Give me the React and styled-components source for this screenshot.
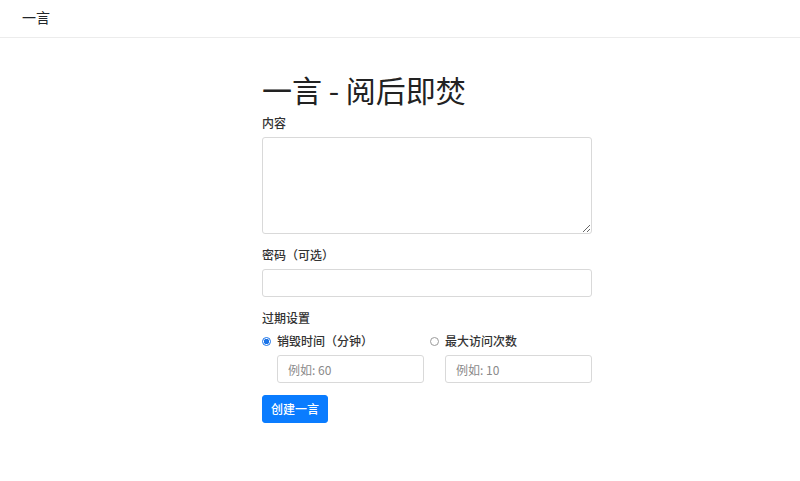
import React from 'react';
import styled, { createGlobalStyle } from 'styled-components';

const GlobalStyle = createGlobalStyle`
  * { box-sizing: border-box; }
  body {
    margin: 0;
    background: #fff;
    color: #212529;
    font-family: "Noto Sans CJK SC", "Noto Sans", "Liberation Sans", sans-serif;
  }
`;

const Navbar = styled.nav`
  height: 38px;
  border-bottom: 1px solid #ececec;
  display: flex;
  align-items: center;
  padding: 0 22px;
`;

const Brand = styled.a`
  font-size: 14px;
  color: #212529;
  text-decoration: none;
  line-height: 1;
  margin-top: -3px;
`;

const Main = styled.main`
  width: 330px;
  margin: 34px 0 0 calc(50% - 138px);
`;

const Title = styled.h1`
  font-size: 30px;
  font-weight: 400;
  line-height: 34px;
  margin: 0 0 8px;
  color: #222;
`;

const Group = styled.div`
  margin-bottom: ${(p) => p.$mb || 12}px;
`;

const Label = styled.label`
  display: block;
  font-size: 12px;
  font-weight: 500;
  line-height: 18px;
  margin-bottom: 5px;
  color: #333;
`;

const TextArea = styled.textarea`
  display: block;
  width: 100%;
  height: 97px;
  border: 1px solid #d9d9d9;
  border-radius: 3px;
  padding: 4px 10px;
  font: inherit;
  font-size: 12px;
  resize: vertical;
  outline: none;
`;

const Input = styled.input`
  display: block;
  width: 100%;
  height: 28px;
  border: 1px solid #d9d9d9;
  border-radius: 3px;
  padding: 4px 10px;
  font: inherit;
  font-size: 12px;
  color: #212529;
  outline: none;
  &::placeholder {
    color: #8a8a8a;
  }
`;

const Columns = styled.div`
  display: grid;
  grid-template-columns: 1fr 1fr;
  column-gap: 6px;
`;

const Option = styled.div`
  display: flex;
  flex-direction: column;
  gap: 5px;
`;

const RadioLabel = styled.label`
  display: flex;
  align-items: center;
  font-size: 12px;
  font-weight: 500;
  line-height: 18px;
  color: #333;
`;

const Radio = styled.input.attrs({ type: 'radio' })`
  appearance: none;
  width: 9px;
  height: 9px;
  margin: 0 6px 0 0;
  border-radius: 50%;
  border: 1px solid #9a9a9a;
  background: #fff;
  &:checked {
    border-color: #1a73e8;
    background: radial-gradient(circle, #1a73e8 0 2.5px, #fff 3px);
  }
`;

const Indented = styled.div`
  padding-left: 15px;
`;

const Button = styled.button`
  background: #0a7cff;
  color: #fff;
  border: 1px solid #0a7cff;
  border-radius: 3px;
  font: inherit;
  font-size: 12px;
  font-weight: 500;
  line-height: 18px;
  padding: 4px 8px;
  height: 28px;
  cursor: pointer;
`;

const App = () => (
  <>
    <GlobalStyle />
    <Navbar>
      <Brand href="#">一言</Brand>
    </Navbar>
    <Main>
      <Title>一言 - 阅后即焚</Title>
      <Group>
        <Label>内容</Label>
        <TextArea />
      </Group>
      <Group>
        <Label>密码（可选）</Label>
        <Input type="password" />
      </Group>
      <Group>
        <Label>过期设置</Label>
        <Columns>
          <Option>
            <RadioLabel>
              <Radio name="expire" defaultChecked />
              销毁时间（分钟）
            </RadioLabel>
            <Indented>
              <Input placeholder="例如: 60" />
            </Indented>
          </Option>
          <Option>
            <RadioLabel>
              <Radio name="expire" />
              最大访问次数
            </RadioLabel>
            <Indented>
              <Input placeholder="例如: 10" />
            </Indented>
          </Option>
        </Columns>
      </Group>
      <Button>创建一言</Button>
    </Main>
  </>
);

export default App;
